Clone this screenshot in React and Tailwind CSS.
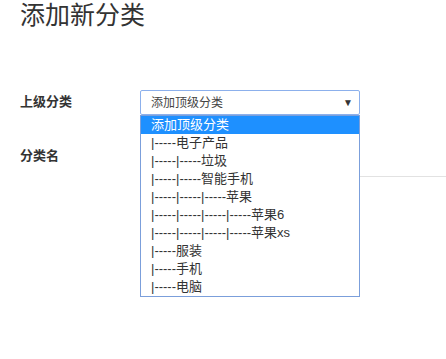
const options = [
  '添加顶级分类',
  '|-----电子产品',
  '|-----|-----垃圾',
  '|-----|-----智能手机',
  '|-----|-----|-----苹果',
  '|-----|-----|-----|-----苹果6',
  '|-----|-----|-----|-----苹果xs',
  '|-----服装',
  '|-----手机',
  '|-----电脑',
];

export default function App() {
  return (
    <div
      className="w-[446px] h-[359px] bg-white overflow-hidden text-[#333]"
      style={{ fontFamily: '"Liberation Sans", "Noto Sans CJK SC", sans-serif' }}
    >
      <h1 className="pl-[20px] text-[25px] leading-[30px] font-normal text-[#333]">添加新分类</h1>

      <div className="mt-[60px] flex items-start">
        <label className="w-[140px] pl-[20px] pt-[3px] text-[13px] font-bold leading-[18px]">上级分类</label>
        <div className="relative w-[220px]">
          <div className="h-[25px] border border-[#8cb0ec] rounded-[2px] flex items-center pl-[10px] pr-[6px] text-[12px] text-[#444]">
            <span className="flex-1">添加顶级分类</span>
            <span className="text-[10px] text-[#333]">▼</span>
          </div>
          <ul className="absolute left-0 top-[25px] w-[220px] border border-[#7b9fdb] bg-white z-10">
            {options.map((o, i) => (
              <li
                key={i}
                className={
                  'h-[18px] leading-[18px] pl-[10px] text-[13px] whitespace-nowrap ' +
                  (i === 0 ? 'bg-[#1e90ff] text-white' : 'text-[#333]')
                }
              >
                {o}
              </li>
            ))}
          </ul>
        </div>
      </div>

      <div className="mt-[30px] flex items-start">
        <label className="w-[140px] pl-[20px] pt-[2px] text-[13px] font-bold leading-[18px]">分类名</label>
        <div className="flex-1 h-[32px] border-b border-[#e2e2e2]"></div>
      </div>
    </div>
  );
}
